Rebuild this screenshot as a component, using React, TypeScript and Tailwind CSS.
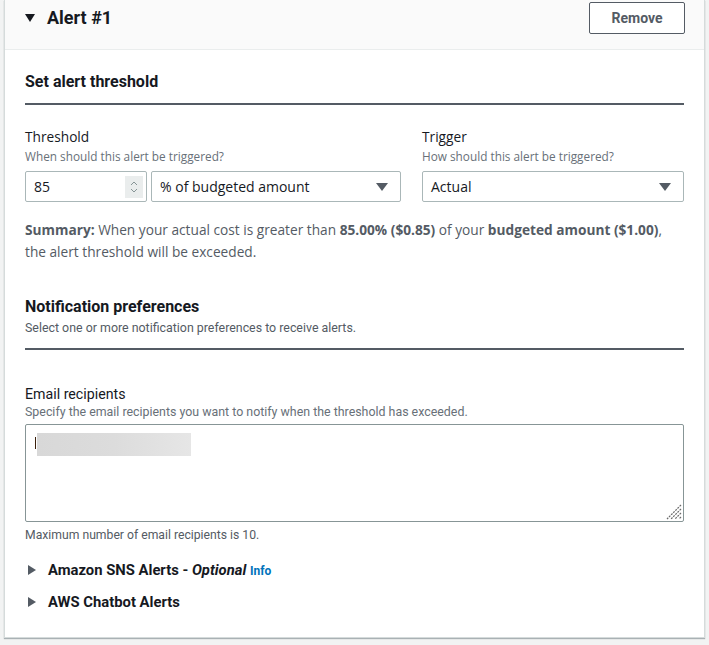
import React from 'react'

const ember = { fontFamily: 'Roboto, "Liberation Sans", sans-serif' }
const open = { fontFamily: '"Open Sans", "Noto Sans", sans-serif' }

function Caret({ dir = 'down' }: { dir?: 'down' | 'right' }) {
  return dir === 'down' ? (
    <svg width="10" height="8" viewBox="0 0 10 8">
      <path d="M0 0h10L5 8z" fill="#16191f" />
    </svg>
  ) : (
    <svg width="8" height="10" viewBox="0 0 8 10">
      <path d="M0 0l8 5-8 5z" fill="#545b64" />
    </svg>
  )
}

function SelectBox({ value, className }: { value: string; className?: string }) {
  return (
    <div
      className={`h-[31px] border border-[#aab7b8] rounded-[2px] bg-white flex items-center justify-between pl-2 pr-3 text-[14px] text-[#16191f] ${className ?? ''}`}
      style={open}
    >
      <span>{value}</span>
      <svg width="12" height="8" viewBox="0 0 12 8">
        <path d="M0 0h12L6 8z" fill="#545b64" />
      </svg>
    </div>
  )
}

function SectionTitle({ title, hint }: { title: string; hint?: string }) {
  return (
    <div className={`border-b-2 border-[#545b64] ${hint ? 'pb-[12px]' : 'pb-[10px]'}`}>
      <h2 className="text-[16px] font-bold text-[#16191f] leading-[22px]" style={ember}>
        {title}
      </h2>
      {hint && (
        <p className="text-[12.4px] text-[#545b64] leading-[16px] mt-[2px]" style={ember}>
          {hint}
        </p>
      )}
    </div>
  )
}

export default function App() {
  return (
    <div className="min-h-screen bg-[#f2f3f3] pl-[4px] pr-[4px] pb-[8px]">
      <div className="bg-white border-l border-r border-b border-[#d5dbdb] shadow-[0_1px_1px_rgba(0,28,36,0.3)]">
        {/* header */}
        <div className="bg-[#fafafa] border-b border-[#eaeded] h-[50px] flex items-start justify-between pl-[20px] pr-[19px]">
          <div className="flex items-center gap-[12px] mt-[7px]">
            <Caret />
            <span className="text-[18px] font-bold text-[#16191f] leading-[22px]" style={ember}>
              Alert #1
            </span>
          </div>
          <button
            className="mt-[2px] w-[96px] h-[32px] border border-[#545b64] rounded-[2px] bg-white text-[14px] font-bold text-[#545b64]"
            style={ember}
          >
            Remove
          </button>
        </div>

        <div className="px-[20px] pt-[21px] pb-[25px]">
          <SectionTitle title="Set alert threshold" />

          <div className="flex gap-[21px] mt-[22px]">
            <div className="w-[376px]">
              <div className="text-[13.7px] text-[#16191f] leading-[20px]" style={open}>
                Threshold
              </div>
              <div className="text-[11.8px] text-[#687078] leading-[16px] mt-[1px]" style={open}>
                When should this alert be triggered?
              </div>
              <div className="flex gap-[4px] mt-[7px]">
                <div
                  className="w-[122px] h-[31px] border border-[#aab7b8] rounded-[2px] bg-white flex items-center justify-between pl-[8px] pr-[3px] text-[14px] text-[#16191f]"
                  style={open}
                >
                  <span>85</span>
                  <div className="w-[18px] h-[22px] bg-[#eaeded] flex items-center justify-center">
                    <svg width="8" height="14" viewBox="0 0 8 14">
                      <path d="M1 5l3-3 3 3M1 9l3 3 3-3" stroke="#879596" strokeWidth="1" fill="none" />
                    </svg>
                  </div>
                </div>
                <SelectBox value="% of budgeted amount" className="flex-1" />
              </div>
            </div>
            <div className="flex-1">
              <div className="text-[13.7px] text-[#16191f] leading-[20px]" style={open}>
                Trigger
              </div>
              <div className="text-[11.8px] text-[#687078] leading-[16px] mt-[1px]" style={open}>
                How should this alert be triggered?
              </div>
              <SelectBox value="Actual" className="mt-[7px]" />
            </div>
          </div>

          <p className="text-[13.7px] text-[#545b64] leading-[22px] mt-[17px]" style={open}>
            <b>Summary:</b> When your actual cost is greater than <b>85.00% ($0.85)</b> of your{' '}
            <b>budgeted amount ($1.00)</b>,<br />
            the alert threshold will be exceeded.
          </p>

          <div className="mt-[33px]">
            <SectionTitle
              title="Notification preferences"
              hint="Select one or more notification preferences to receive alerts."
            />
          </div>

          <div className="mt-[34px]">
            <div className="text-[14.2px] text-[#16191f] leading-[20px]" style={ember}>
              Email recipients
            </div>
            <div className="text-[12.4px] text-[#687078] leading-[16px]" style={ember}>
              Specify the email recipients you want to notify when the threshold has exceeded.
            </div>
            <div className="relative mt-[4px] h-[98px] border border-[#879596] rounded-[2px] bg-white">
              <div className="absolute left-[9px] top-[12px] w-[1px] h-[12px] bg-[#3a1f0a]" />
              <div className="absolute left-[11px] top-[8px] w-[154px] h-[23px] bg-gradient-to-r from-[#d8d8d8] via-[#dcdcdc] to-[#e6e6e6]" />
              <svg className="absolute right-[1px] bottom-[1px]" width="18" height="18" viewBox="0 0 18 18">
                <path
                  d="M17 3L3 17M17 7L7 17M17 11L11 17M17 15L15 17"
                  stroke="#6b6b6b"
                  strokeWidth="1.2"
                  strokeDasharray="2 1"
                  fill="none"
                />
              </svg>
            </div>
            <div className="text-[12.2px] text-[#545b64] leading-[16px] mt-[5px]" style={ember}>
              Maximum number of email recipients is 10.
            </div>
          </div>

          <div className="mt-[17px] flex flex-col gap-[12px]">
            <div className="flex items-center gap-[12px] h-[20px] pl-[3px]">
              <Caret dir="right" />
              <span className="text-[14.8px] font-bold text-[#16191f]" style={ember}>
                Amazon SNS Alerts - <i>Optional</i>{' '}
                <span className="text-[12px] text-[#0073bb]">Info</span>
              </span>
            </div>
            <div className="flex items-center gap-[12px] h-[20px] pl-[3px]">
              <Caret dir="right" />
              <span className="text-[14.8px] font-bold text-[#16191f]" style={ember}>
                AWS Chatbot Alerts
              </span>
            </div>
          </div>
        </div>
      </div>
    </div>
  )
}
